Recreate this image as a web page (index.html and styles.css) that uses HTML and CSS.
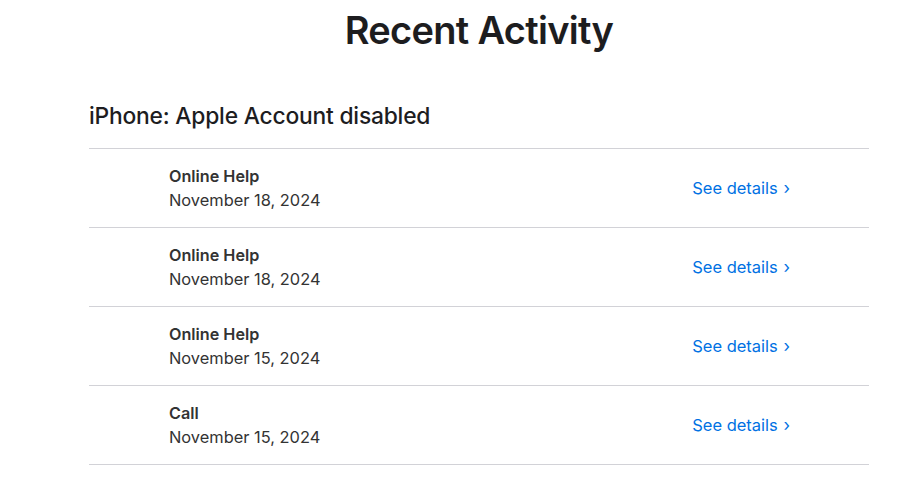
FILE: index.html
```html
<!DOCTYPE html>
<html>
<head>
<meta charset="utf-8">
<link rel="stylesheet" href="styles.css">
</head>
<body>
<main class="page">
  <h1 class="page-title">Recent Activity</h1>
  <section class="case">
    <h2 class="case-title">iPhone: Apple Account disabled</h2>
    <ul class="activity-list">
      <li class="activity">
        <div class="activity-info">
          <div class="activity-type">Online Help</div>
          <div class="activity-date">November 18, 2024</div>
        </div>
        <a class="details-link" href="#">See details <span class="chev">›</span></a>
      </li>
      <li class="activity">
        <div class="activity-info">
          <div class="activity-type">Online Help</div>
          <div class="activity-date">November 18, 2024</div>
        </div>
        <a class="details-link" href="#">See details <span class="chev">›</span></a>
      </li>
      <li class="activity">
        <div class="activity-info">
          <div class="activity-type">Online Help</div>
          <div class="activity-date">November 15, 2024</div>
        </div>
        <a class="details-link" href="#">See details <span class="chev">›</span></a>
      </li>
      <li class="activity">
        <div class="activity-info">
          <div class="activity-type">Call</div>
          <div class="activity-date">November 15, 2024</div>
        </div>
        <a class="details-link" href="#">See details <span class="chev">›</span></a>
      </li>
    </ul>
  </section>
</main>
</body>
</html>
```

FILE: styles.css
```css
* { box-sizing: border-box; }
html, body { margin: 0; padding: 0; background: #fff; }
body {
  font-family: Inter, "Noto Sans", "Liberation Sans", sans-serif;
  color: #1d1d1f;
}
.page {
  width: 780px;
  margin-left: 89px;
  padding-top: 8px;
}
.page-title {
  margin: 0;
  text-align: center;
  font-size: 38px;
  font-weight: 600;
  line-height: 44px;
  letter-spacing: -0.7px;
}
.case { margin-top: 49px; }
.case-title {
  margin: 0;
  font-size: 22.8px;
  font-weight: 500;
  line-height: 30px;
  letter-spacing: -0.2px;
  padding-bottom: 17px;
  border-bottom: 1px solid #d2d2d7;
}
.activity-list { list-style: none; margin: 0; padding: 0; }
.activity {
  display: flex;
  align-items: center;
  justify-content: space-between;
  height: 79px;
  padding: 0 79px 0 80px;
  border-bottom: 1px solid #d2d2d7;
}
.activity-type {
  font-size: 16.2px;
  font-weight: 600;
  color: #333;
  line-height: 24px;
}
.activity-date {
  font-size: 16.4px;
  color: #333;
  line-height: 25px;
}
.details-link {
  color: #0071e3;
  text-decoration: none;
  font-size: 16.5px;
  line-height: 22px;
  letter-spacing: 0;
}
.chev { font-size: 17px; margin-left: 1px; }
```
